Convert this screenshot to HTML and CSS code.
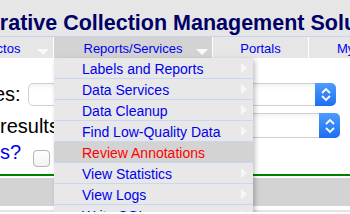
FILE: index.html
```html
<!DOCTYPE html>
<html lang="en">
<head>
    <meta charset="UTF-8">
    <title>Arctos</title>
    <link rel="stylesheet" href="styles.css">
</head>
<body>
    <!-- header -->
    <div class="header">
        <h1 class="title">Collaborative Collection Management Solution</h1>
    </div>

    <!-- main menu -->
    <ul class="nav">
        <li class="nav-item first">Arctos<i class="down"></i></li>
        <li class="nav-item reports active">Reports/Services<i class="down"></i>
            <ul class="dropdown">
                <li class="drop-item">Labels and Reports<i class="right"></i></li>
                <li class="drop-item">Data Services<i class="right"></i></li>
                <li class="drop-item">Data Cleanup<i class="right"></i></li>
                <li class="drop-item">Find Low-Quality Data<i class="right"></i></li>
                <li class="drop-item hover">Review Annotations</li>
                <li class="drop-item">View Statistics<i class="right"></i></li>
                <li class="drop-item">View Logs<i class="right"></i></li>
                <li class="drop-item">Write SQL<i class="right"></i></li>
            </ul>
        </li>
        <li class="nav-item portals">Portals</li>
        <li class="nav-item my">My Stuff</li>
    </ul>

    <!-- search form -->
    <div class="content">
        <div class="row row-one">
            <span class="label label-one">es:</span>
            <div class="select select-one">
                <span class="select-btn">
                    <svg width="20" height="23" viewBox="0 0 20 23"><path d="M6 10 L10 6 L14 10 M6 13 L10 17 L14 13" fill="none" stroke="#fff" stroke-width="1.8"/></svg>
                </span>
            </div>
        </div>
        <div class="row row-two">
            <span class="label">results</span>
            <div class="select select-two">
                <span class="select-btn">
                    <svg width="20" height="24" viewBox="0 0 20 24"><path d="M6 10 L10 6 L14 10 M6 14 L10 18 L14 14" fill="none" stroke="#fff" stroke-width="1.8"/></svg>
                </span>
            </div>
        </div>
        <div class="row row-three">
            <span class="label label-link">s?</span>
            <span class="checkbox"></span>
        </div>
    </div>

    <div class="rule"></div>
    <div class="band"></div>
    <div class="band-line"></div>
</body>
</html>
```

FILE: styles.css
```css
body {
    margin: 0;
    font-family: 'Liberation Sans', Arial, sans-serif;
    background-color: white;
    overflow: hidden;
}

/* header */
.header {
    background-color: #e6e6e6;
    height: 36px;
    overflow: hidden;
}
.title {
    margin: 0;
    padding-top: 11px;
    font-size: 21.5px;
    line-height: 24px;
    font-weight: bold;
    color: #000066;
    white-space: nowrap;
    text-indent: -79px;
}

/* main menu */
.nav {
    display: flex;
    list-style: none;
    margin: 0;
    padding: 0;
    border-top: 1px solid #c6d4f2;
    background-color: #e6e6e6;
    height: 21px;
    position: relative;
    z-index: 10;
}
.nav-item {
    position: relative;
    flex: none;
    box-sizing: border-box;
    height: 21px;
    padding-top: 4px;
    line-height: 15px;
    font-size: 13px;
    color: #0000ee;
    text-align: center;
    border-right: 1px solid #fff;
    white-space: nowrap;
}
.first {
    width: 94px;
    margin-left: -40px;
    padding-right: 9px;
}
.reports {
    width: 159px;
}
.portals {
    width: 96px;
}
.my {
    padding-left: 28px;
    text-align: left;
    border-right: none;
}
.active {
    background-color: #d3d3d3;
}
.down {
    position: absolute;
    right: 4px;
    top: 12px;
    width: 0;
    height: 0;
    border-left: 6px solid transparent;
    border-right: 6px solid transparent;
    border-top: 6px solid #fafafa;
}

/* dropdown */
.dropdown {
    position: absolute;
    top: 21px;
    left: 0;
    width: 199px;
    list-style: none;
    margin: 0;
    padding: 0;
    background-color: #e8e8e8;
    box-shadow: 2px 2px 5px rgba(0, 0, 0, 0.25);
    text-align: left;
}
.drop-item {
    position: relative;
    height: 17px;
    padding: 3px 0 0 28px;
    line-height: 16px;
    font-size: 14px;
    color: #0000ee;
    border-bottom: 1px solid #c9d7f7;
}
.drop-item.hover {
    background-color: #d3d3d3;
    color: #ff0000;
}
.right {
    position: absolute;
    right: 6px;
    top: 5px;
    width: 0;
    height: 0;
    border-top: 5px solid transparent;
    border-bottom: 5px solid transparent;
    border-left: 6px solid #f7f7f7;
}

/* search form */
.content {
    padding-top: 24px;
}
.row {
    display: flex;
    align-items: center;
}
.row-two {
    margin-top: 7px;
}
.row-three {
    margin-top: 2px;
    align-items: flex-start;
}
.label {
    font-size: 20px;
    line-height: 24px;
    color: #000;
    white-space: nowrap;
}
.label-one {
    margin-left: -6px;
}
.label-link {
    color: #0000ee;
}
.select {
    position: relative;
    box-sizing: border-box;
    border: 1px solid #cfcfcf;
    border-radius: 5px;
    background: linear-gradient(#f4f4f4, #fff 6px);
}
.select-one {
    height: 23px;
    margin-left: 7px;
    flex: 1;
    margin-right: 14px;
}
.select-two {
    height: 25px;
    margin-left: 20px;
    flex: 1;
    margin-right: 10px;
}
.select-btn {
    position: absolute;
    top: -1px;
    right: -1px;
    bottom: -1px;
    width: 21px;
    border-radius: 0 5px 5px 0;
    background: linear-gradient(#4f9bff, #1c6ff3);
    display: flex;
    align-items: center;
    justify-content: center;
}
.checkbox {
    box-sizing: border-box;
    width: 17px;
    height: 17px;
    margin: 10px 0 0 12px;
    border: 1px solid #b4b4b4;
    border-radius: 4px;
    background: linear-gradient(#fff, #f2f2f2);
}

/* bottom bars */
.rule {
    height: 2px;
    margin-top: 7px;
    background-color: #008000;
}
.band {
    height: 28px;
    margin-top: 2px;
    background-color: #d3d3d3;
}
.band-line {
    height: 2px;
    margin-top: 4px;
    background-color: #e4e4e4;
}
```
